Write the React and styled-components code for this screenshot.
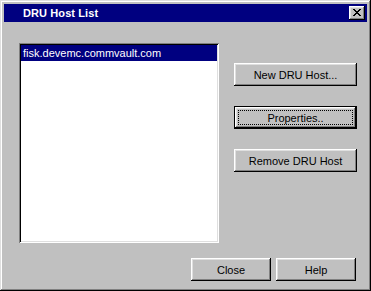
import React from "react";
import styled, { createGlobalStyle } from "styled-components";

const GlobalStyle = createGlobalStyle`
  html, body {
    margin: 0;
    padding: 0;
    background: #c0c0c0;
  }
  body {
    font-family: "Liberation Sans", Arial, sans-serif;
    font-size: 11px;
  }
`;

const Window = styled.div`
  width: 371px;
  height: 291px;
  box-sizing: border-box;
  background: #c0c0c0;
  padding: 4px;
  box-shadow: inset -1px -1px #000, inset 1px 1px #dfdfdf,
    inset -2px -2px #808080, inset 2px 2px #fff;
  display: flex;
  flex-direction: column;
`;

const TitleBar = styled.div`
  height: 18px;
  background: #000080;
  color: #fff;
  display: flex;
  align-items: center;
  justify-content: space-between;
  padding: 0 2px 0 19px;
  font-weight: bold;
  font-size: 11px;
  letter-spacing: 0.1px;
`;

const CloseBox = styled.div`
  width: 16px;
  height: 14px;
  box-sizing: border-box;
  background: #c0c0c0;
  box-shadow: inset -1px -1px #000, inset 1px 1px #fff,
    inset -2px -2px #808080, inset 2px 2px #dfdfdf;
  display: flex;
  align-items: center;
  justify-content: center;
  padding: 0 1px 1px 0;
`;

const Body = styled.div`
  flex: 1;
  display: flex;
  flex-direction: column;
  padding: 21px 10px 0 15px;
`;

const Row = styled.div`
  display: flex;
  gap: 15px;
`;

const ListBox = styled.div`
  width: 200px;
  height: 200px;
  box-sizing: border-box;
  background: #fff;
  padding: 2px;
  box-shadow: inset 1px 1px #808080, inset -1px -1px #fff,
    inset 2px 2px #000, inset -2px -2px #dfdfdf;
`;

const ListItem = styled.div`
  height: 16px;
  line-height: 16px;
  padding-left: 2px;
  white-space: nowrap;
  background: ${p => (p.selected ? "#000080" : "transparent")};
  color: ${p => (p.selected ? "#fff" : "#000")};
`;

const SideColumn = styled.div`
  display: flex;
  flex-direction: column;
  gap: 20px;
  padding-top: 20px;
`;

const Button = styled.button`
  width: ${p => p.w || 123}px;
  height: 23px;
  box-sizing: border-box;
  border: none;
  margin: 0;
  padding: 0;
  background: #c0c0c0;
  font-family: "Liberation Sans", Arial, sans-serif;
  font-size: 11px;
  color: #000;
  position: relative;
  box-shadow: ${p =>
    p.isDefault
      ? "inset 0 0 0 1px #000, inset -2px -2px #000, inset 2px 2px #fff, inset -3px -3px #808080, inset 3px 3px #dfdfdf"
      : "inset -1px -1px #000, inset 1px 1px #fff, inset -2px -2px #808080, inset 2px 2px #dfdfdf"};
`;

const FocusRing = styled.span`
  position: absolute;
  left: 4px;
  top: 4px;
  right: 4px;
  bottom: 4px;
  border: 1px dotted #000;
  display: flex;
  align-items: center;
  justify-content: center;
`;

const Footer = styled.div`
  display: flex;
  justify-content: flex-end;
  gap: 5px;
  margin-top: 15px;
  padding-right: 1px;
`;

const CloseGlyph = () => (
  <svg width="8" height="7" viewBox="0 0 8 7" shapeRendering="crispEdges">
    <path
      fill="#000"
      d="M0 0h2v1h-2z M6 0h2v1h-2z M1 1h2v1h-2z M5 1h2v1h-2z M2 2h4v1h-4z M3 3h2v1h-2z M2 4h4v1h-4z M1 5h2v1h-2z M5 5h2v1h-2z M0 6h2v1h-2z M6 6h2v1h-2z"
    />
  </svg>
);

export default function App() {
  return (
    <>
      <GlobalStyle />
      <Window>
        <TitleBar>
          <span>DRU Host List</span>
          <CloseBox>
            <CloseGlyph />
          </CloseBox>
        </TitleBar>
        <Body>
          <Row>
            <ListBox>
              <ListItem selected>fisk.devemc.commvault.com</ListItem>
            </ListBox>
            <SideColumn>
              <Button>New DRU Host...</Button>
              <Button isDefault>
                <FocusRing>Properties..</FocusRing>
              </Button>
              <Button>Remove DRU Host</Button>
            </SideColumn>
          </Row>
          <Footer>
            <Button w={80}>Close</Button>
            <Button w={80}>Help</Button>
          </Footer>
        </Body>
      </Window>
    </>
  );
}
